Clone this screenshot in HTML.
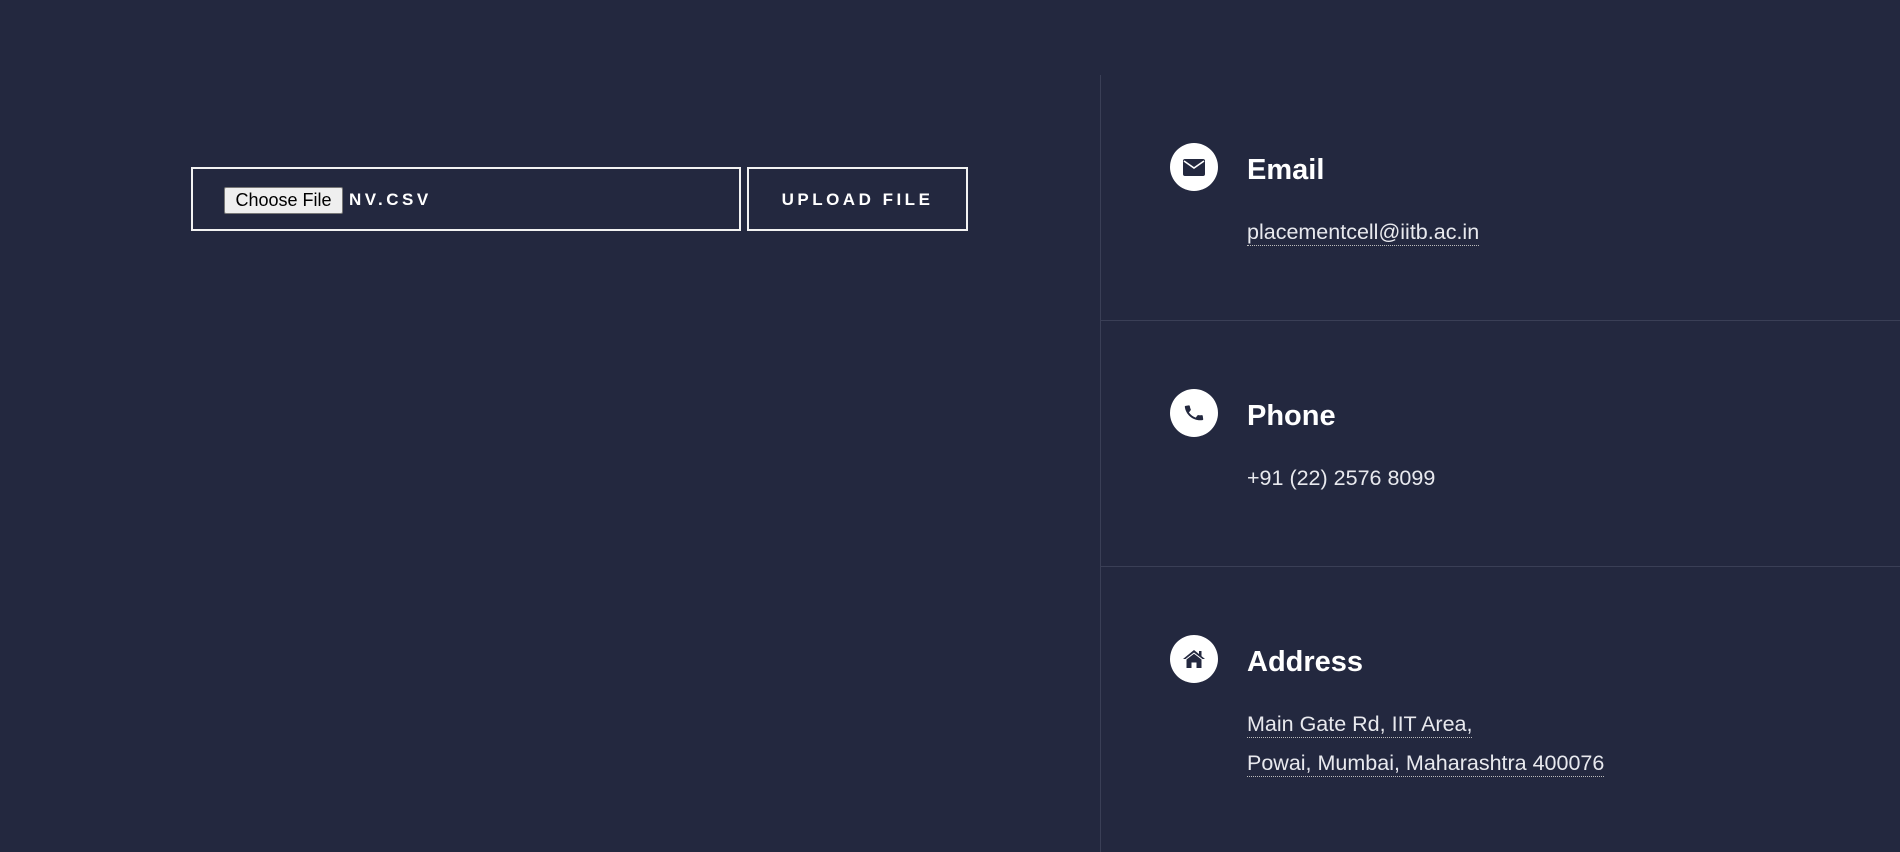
<!DOCTYPE html>
<html><head><meta charset="utf-8"><style>
*{margin:0;padding:0;box-sizing:border-box}
body{width:1900px;height:852px;background:#23283f;font-family:"Liberation Sans",sans-serif;color:#fff;position:relative;overflow:hidden}
.abs{position:absolute}
.box{border:2.5px solid #f2f2f2}
.cf{left:224px;top:187px;width:119px;height:27px;background:#efefef;border:1px solid #777;border-radius:2px;color:#000;font-size:18px;line-height:25px;text-align:center}
.lbl{font-weight:bold;font-size:17px;letter-spacing:3.5px}
.circ{width:48px;height:48px;border-radius:50%;background:#fff;display:flex;align-items:center;justify-content:center}
.t{font-weight:bold;font-size:29px;left:1247px}
.v{font-size:21.5px;left:1247px;color:#e8e9ee;font-weight:300}
.u{border-bottom:1px dotted #bbb;padding-bottom:1px}
</style></head><body>
<div class="abs box" style="left:191px;top:167px;width:550px;height:64px"></div>
<div class="abs cf">Choose File</div>
<div class="abs lbl" style="left:349px;top:190px">NV.CSV</div>
<div class="abs box" style="left:747px;top:167px;width:221px;height:64px"></div>
<div class="abs lbl" style="left:747px;width:221px;text-align:center;top:190px">UPLOAD FILE</div>

<div class="abs" style="left:1100px;top:75px;width:1px;height:777px;background:#3a3f56"></div>
<div class="abs" style="left:1100px;top:320px;width:800px;height:1px;background:#3a3f56"></div>
<div class="abs" style="left:1100px;top:566px;width:800px;height:1px;background:#3a3f56"></div>

<div class="abs circ" style="left:1170px;top:143px"><svg width="22" height="17" viewBox="0 0 22 17"><rect x="0" y="0" width="22" height="17" rx="2" fill="#23283f"/><path d="M1 2 L11 9 L21 2" stroke="#fff" stroke-width="1.6" fill="none"/></svg></div>
<div class="abs t" style="top:154px">Email</div>
<div class="abs v" style="top:220px"><span class="u">placementcell@iitb.ac.in</span></div>

<div class="abs circ" style="left:1170px;top:389px"><svg width="22" height="22" viewBox="0 0 24 24"><path d="M20 15.5c-1.2 0-2.4-.2-3.6-.6-.3-.1-.7 0-1 .2l-2.2 2.2c-2.8-1.4-5.1-3.8-6.6-6.6l2.2-2.2c.3-.3.4-.7.2-1-.3-1.1-.5-2.3-.5-3.5 0-.6-.4-1-1-1H4c-.6 0-1 .4-1 1 0 9.4 7.6 17 17 17 .6 0 1-.4 1-1v-3.5c0-.6-.4-1-1-1z" fill="#23283f" transform="rotate(-8 12 12)"/></svg></div>
<div class="abs t" style="top:400px">Phone</div>
<div class="abs v" style="top:466px">+91 (22) 2576 8099</div>

<div class="abs circ" style="left:1170px;top:635px"><svg width="24" height="22" viewBox="0 0 24 22"><path d="M12 2 L1 11 L3.5 11 L12 4.5 L20.5 11 L23 11 Z" fill="#23283f"/><path d="M4.5 11.5 L12 5.8 L19.5 11.5 V20 H14.5 V14.5 H9.5 V20 H4.5 Z" fill="#23283f"/><rect x="17" y="3" width="2.5" height="5" fill="#23283f"/></svg></div>
<div class="abs t" style="top:646px">Address</div>
<div class="abs v" style="top:712px"><span class="u">Main Gate Rd, IIT Area,</span></div>
<div class="abs v" style="top:751px"><span class="u">Powai, Mumbai, Maharashtra 400076</span></div>
</body></html>
